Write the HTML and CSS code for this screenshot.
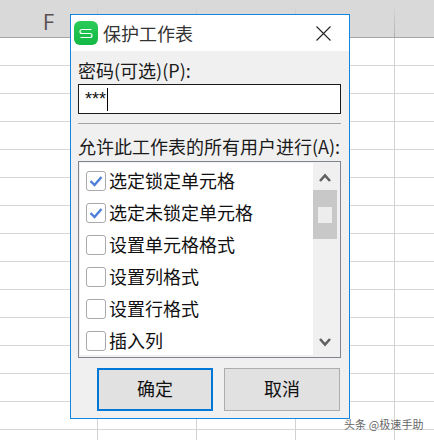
FILE: index.html
```html
<!DOCTYPE html>
<html lang="zh-CN">
<head>
<meta charset="utf-8">
<title>保护工作表</title>
<link rel="stylesheet" href="styles.css">
</head>
<body>
<div class="sheet">
  <div class="col-header">
    <div class="col">F</div>
    <div class="col">G</div>
    <div class="col">H</div>
    <div class="col">I</div>
  </div>
  <div class="grid"></div>
</div>

<div class="dialog">
  <div class="titlebar">
    <svg class="app-icon" width="24" height="24" viewBox="0 0 24 24">
      <defs>
        <linearGradient id="g" x1="0" y1="0" x2="0" y2="1">
          <stop offset="0" stop-color="#2bcb58"/>
          <stop offset="1" stop-color="#14b844"/>
        </linearGradient>
      </defs>
      <rect width="24" height="24" rx="6" fill="url(#g)"/>
      <path d="M17.5 8.5H8a2 2 0 0 0 0 4h8a2 2 0 0 1 0 4H6.5" fill="none" stroke="#fff" stroke-width="1.2"/>
    </svg>
    <span class="title">保护工作表</span>
    <svg class="close" width="15" height="15" viewBox="0 0 15 15">
      <path d="M0.5 0.5L14.5 14.5M14.5 0.5L0.5 14.5" fill="none" stroke="#222" stroke-width="1.1"/>
    </svg>
  </div>
  <div class="body">
    <div class="label label-pass">密码(可选)(P):</div>
    <div class="input"><span class="stars">***</span><span class="caret"></span></div>
    <div class="divider"></div>
    <div class="label label-list">允许此工作表的所有用户进行(A):</div>
    <div class="listbox">
      <div class="items">
        <div class="item"><span class="box"><svg width="14" height="12" viewBox="0 0 14 12"><path d="M1.5 6L5.5 10L12.5 2" fill="none" stroke="#4d7fd8" stroke-width="2.4"/></svg></span>选定锁定单元格</div>
        <div class="item"><span class="box"><svg width="14" height="12" viewBox="0 0 14 12"><path d="M1.5 6L5.5 10L12.5 2" fill="none" stroke="#4d7fd8" stroke-width="2.4"/></svg></span>选定未锁定单元格</div>
        <div class="item"><span class="box"></span>设置单元格格式</div>
        <div class="item"><span class="box"></span>设置列格式</div>
        <div class="item"><span class="box"></span>设置行格式</div>
        <div class="item"><span class="box"></span>插入列</div>
      </div>
      <div class="scrollbar">
        <div class="arrow arrow-up"><svg width="12" height="9" viewBox="0 0 12 9"><path d="M1 8L6 2.5L11 8" fill="none" stroke="#606060" stroke-width="2.6"/></svg></div>
        <div class="thumb"><span class="grip"></span></div>
        <div class="track"></div>
        <div class="arrow arrow-down"><svg width="12" height="9" viewBox="0 0 12 9"><path d="M1 1L6 6.5L11 1" fill="none" stroke="#606060" stroke-width="2.6"/></svg></div>
      </div>
    </div>
    <div class="buttons">
      <div class="btn btn-primary">确定</div>
      <div class="btn">取消</div>
    </div>
  </div>
</div>

<div class="watermark">头条 @极速手助</div>
</body>
</html>
```

FILE: styles.css
```css
* {
  box-sizing: border-box;
}

html,
body {
  margin: 0;
  padding: 0;
  width: 434px;
  height: 440px;
  overflow: hidden;
  background: #fff;
  font-family: "Noto Sans CJK SC", "Liberation Sans", sans-serif;
}

.sheet {
  display: flex;
  flex-direction: column;
  width: 434px;
  height: 440px;
}

.col-header {
  display: flex;
  flex: none;
  height: 38px;
  margin-left: -1px;
  background: #d9d9d9;
  border-bottom: 1px solid #a6a6a6;
}

.col {
  flex: none;
  width: 99px;
  padding-top: 8px;
  text-align: center;
  font-family: "Open Sans", sans-serif;
  font-size: 22px;
  line-height: 26px;
  color: #5a5050;
  background: linear-gradient(#d4d4d4, #b0b0b0) right 8px / 1px 29px no-repeat;
}

.grid {
  flex: 1;
  background-color: #fff;
  background-image:
    repeating-linear-gradient(to bottom, transparent 0 27px, #d6d6d6 27px 28px),
    repeating-linear-gradient(to right, transparent 0 98px, #d2d2d2 98px 99px);
  background-position: 0 0, -1px 0;
}

.dialog {
  position: absolute;
  left: 70px;
  top: 14px;
  width: 280px;
  height: 405px;
  display: flex;
  flex-direction: column;
  background: #f0f0f0;
  border: 1px solid #1287e2;
}

.titlebar {
  display: flex;
  flex: none;
  align-items: center;
  height: 36px;
  padding-left: 3px;
  background: #fff;
}

.app-icon {
  flex: none;
}

.title {
  margin-left: 5px;
  font-size: 18px;
  line-height: 24px;
  color: #333;
}

.close {
  flex: none;
  margin-left: auto;
  margin-right: 18px;
}

.body {
  display: flex;
  flex: 1;
  flex-direction: column;
  padding: 0 8px 0 7px;
}

.label {
  font-size: 18px;
  line-height: 24px;
  color: #1a1a1a;
  white-space: nowrap;
}

.label-pass {
  height: 33px;
  padding-top: 7px;
}

.input {
  display: flex;
  flex: none;
  align-items: center;
  height: 30px;
  padding-left: 6px;
  background: #fff;
  border: 1px solid #1a1a1a;
}

.stars {
  font-family: "Liberation Sans", sans-serif;
  font-size: 18px;
  line-height: 22px;
  color: #111;
}

.caret {
  width: 1px;
  height: 23px;
  margin-left: 1px;
  background: #000;
}

.divider {
  flex: none;
  height: 1px;
  margin-top: 9px;
  background: #a3a3a3;
}

.label-list {
  height: 37px;
  padding-top: 10px;
}

.listbox {
  display: flex;
  flex: none;
  height: 197px;
  padding: 1px 3px 2px 1px;
  background: #f0f0f0;
  border: 1px solid #80858d;
}

.items {
  flex: 1;
  padding-top: 8px;
  background: #fff;
}

.item {
  display: flex;
  align-items: flex-start;
  height: 20px;
  margin-bottom: 12px;
  padding-left: 6px;
  font-size: 18px;
  line-height: 18px;
  color: #111;
  white-space: nowrap;
}

.box {
  display: flex;
  flex: none;
  align-items: center;
  justify-content: center;
  width: 20px;
  height: 20px;
  margin-right: 3px;
  background: #fff;
  border: 1px solid #a9a9ad;
  border-radius: 3px;
}

.scrollbar {
  display: flex;
  flex: none;
  flex-direction: column;
  width: 24px;
}

.arrow {
  display: flex;
  flex: none;
  justify-content: center;
}

.arrow-up {
  height: 27px;
  padding-top: 10px;
}

.arrow-down {
  height: 19px;
  padding-top: 2px;
}

.thumb {
  display: flex;
  flex: none;
  align-items: center;
  justify-content: center;
  height: 49px;
  background: #c8c8c8;
}

.grip {
  width: 14px;
  height: 16px;
  background: #ededed;
}

.track {
  flex: 1;
}

.buttons {
  display: flex;
  flex: none;
  gap: 11px;
  height: 43px;
  margin-top: 10px;
  padding-left: 19px;
}

.btn {
  display: flex;
  flex: none;
  align-items: center;
  justify-content: center;
  width: 116px;
  height: 43px;
  padding-bottom: 4px;
  font-size: 18px;
  color: #111;
  background: #e1e1e1;
  border: 1px solid #adadad;
}

.btn-primary {
  border: 2px solid #0078d7;
}

.watermark {
  position: absolute;
  left: 344px;
  top: 416px;
  font-size: 11px;
  line-height: 16px;
  letter-spacing: 0.1px;
  color: #666;
  white-space: nowrap;
  text-shadow: 0 0 2px #fff;
}
```
